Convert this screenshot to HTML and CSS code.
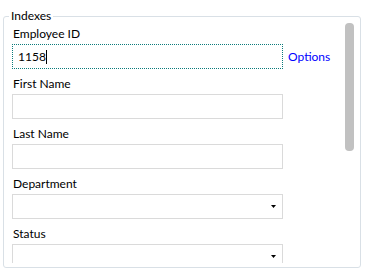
FILE: index.html
```html
<!DOCTYPE html>
<html lang="en">
<head>
  <meta charset="UTF-8">
  <meta name="viewport" content="width=device-width, initial-scale=1.0">
  <title>Indexes</title>
  <link rel="stylesheet" href="styles.css">
</head>
<body>
  <fieldset class="group">
    <legend>Indexes</legend>
    <div class="pane">
      <div class="fields">
        <div class="field">
          <label>Employee ID</label>
          <div class="row">
            <div class="input focused">1158<span class="caret"></span></div>
            <a class="link" href="#">Options</a>
          </div>
        </div>

        <div class="field">
          <label>First Name</label>
          <div class="input"></div>
        </div>

        <div class="field">
          <label>Last Name</label>
          <div class="input"></div>
        </div>

        <div class="field">
          <label>Department</label>
          <div class="input select"></div>
        </div>

        <div class="field">
          <label>Status</label>
          <div class="input select"></div>
        </div>
      </div>
      <div class="scrollbar">
        <div class="thumb"></div>
      </div>
    </div>
  </fieldset>
</body>
</html>
```

FILE: styles.css
```css
body {
  margin: 0;
  font-family: Lato, "Noto Sans", sans-serif;
  font-size: 12px;
  color: #000;
  background: #fff;
}
.group {
  margin: 10px 5px 0 3px;
  padding: 0 0 4px 0;
  border: 1px solid #d9e0e6;
  border-radius: 3px;
}
.group legend {
  margin-left: 5px;
  padding: 0 2px;
  line-height: 12px;
}
.pane {
  display: flex;
  height: 241px;
}
.fields {
  flex: 1;
  overflow: hidden;
  padding: 4px 0 0 8px;
}
.scrollbar {
  width: 9px;
  padding: 1px 6px 0 1px;
}
.thumb {
  height: 128px;
  background: #c1c1c1;
  border-radius: 4px;
}
.field {
  height: 50px;
}
.field label {
  display: block;
  line-height: 16px;
  margin-bottom: 2px;
  padding-left: 1px;
}
.row {
  display: flex;
  align-items: center;
  gap: 5px;
}
.input {
  width: 271px;
  height: 25px;
  box-sizing: border-box;
  border: 1px solid #dadada;
  padding: 0 5px;
  display: flex;
  align-items: center;
}
.input.focused {
  border: 1px dotted #0b7b7b;
}
.caret {
  display: inline-block;
  width: 1px;
  height: 14px;
  background: #000;
}
.select {
  justify-content: flex-end;
  padding-right: 6px;
}
.select::after {
  content: "";
  width: 5px;
  height: 3px;
  background: #000;
  clip-path: polygon(0 0, 100% 0, 50% 100%);
}
.link {
  color: #0000ff;
  text-decoration: none;
}
```
